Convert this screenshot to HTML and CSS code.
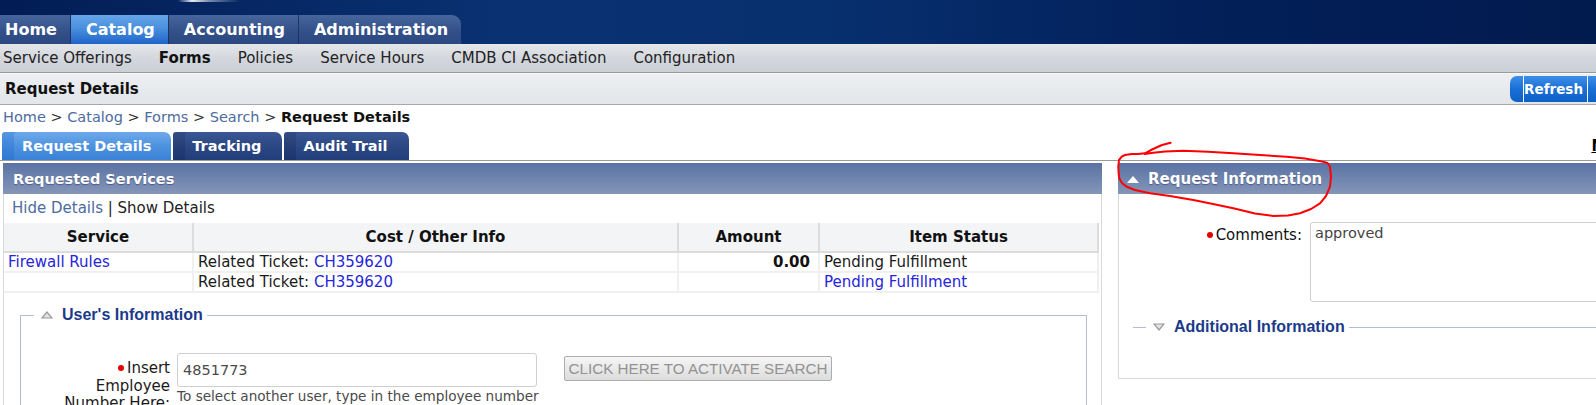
FILE: index.html
```html
<!DOCTYPE html>
<html lang="en">
<head>
<meta charset="utf-8">
<title>Request Details</title>
<link rel="stylesheet" href="styles.css">
</head>
<body>
<div class="page">
  <header class="banner">
    <nav class="main-tabs">
      <a class="mtab first" href="#">Home</a>
      <a class="mtab active" href="#">Catalog</a>
      <a class="mtab" href="#">Accounting</a>
      <a class="mtab last" href="#">Administration</a>
    </nav>
  </header>

  <nav class="subnav">
    <a href="#">Service Offerings</a>
    <a href="#" class="cur">Forms</a>
    <a href="#">Policies</a>
    <a href="#">Service Hours</a>
    <a href="#">CMDB CI Association</a>
    <a href="#">Configuration</a>
  </nav>

  <div class="titlebar">
    <h1>Request Details</h1>
    <div class="actions">
      <span class="cap"></span>
      <button class="tbtn">Refresh</button>
      <button class="tbtn second">Close</button>
    </div>
  </div>

  <div class="crumbs">
    <a href="#">Home</a> &gt; <a href="#">Catalog</a> &gt; <a href="#">Forms</a> &gt; <a href="#">Search</a> &gt; <b>Request Details</b>
  </div>

  <div class="ctabs">
    <a class="ctab active" href="#">Request Details</a>
    <a class="ctab" href="#">Tracking</a>
    <a class="ctab" href="#">Audit Trail</a>
    <a class="newlink" href="#">New</a>
  </div>

  <main class="content">
    <section class="panel">
      <h2 class="phead">Requested Services</h2>
      <div class="toggles"><a href="#" class="muted">Hide Details</a> | Show Details</div>
      <table class="svc">
        <colgroup>
          <col class="c1"><col class="c2"><col class="c3"><col class="c4">
        </colgroup>
        <thead>
          <tr><th>Service</th><th>Cost / Other Info</th><th>Amount</th><th>Item Status</th></tr>
        </thead>
        <tbody>
          <tr>
            <td><a class="lnk" href="#">Firewall Rules</a></td>
            <td>Related Ticket: <a class="lnk" href="#">CH359620</a></td>
            <td class="amt">0.00</td>
            <td>Pending Fulfillment</td>
          </tr>
          <tr>
            <td></td>
            <td>Related Ticket: <a class="lnk" href="#">CH359620</a></td>
            <td></td>
            <td><a class="lnk" href="#">Pending Fulfillment</a></td>
          </tr>
        </tbody>
      </table>

      <fieldset class="group">
        <legend class="glegend">
          <svg class="tri" width="12" height="8" viewBox="0 0 12 8"><polygon points="1,7 6,1 11,7" fill="#e4e4e4" stroke="#9a9a9a" stroke-width="1.2"/></svg>
          <span>User's Information</span>
        </legend>
        <div class="field-row">
          <label class="flabel"><span class="req"></span>Insert Employee Number Here:</label>
          <div class="field">
            <input class="text-in" type="text" value="4851773">
            <div class="help">To select another user, type in the employee number</div>
          </div>
          <button class="search-btn">CLICK HERE TO ACTIVATE SEARCH</button>
        </div>
      </fieldset>
    </section>

    <section class="panel right">
      <h2 class="phead">
        <svg class="tri-w" width="12" height="8" viewBox="0 0 12 8"><polygon points="0,8 6,1 12,8" fill="#fff"/></svg>
        <span>Request Information</span>
      </h2>
      <div class="form-row">
        <label class="clabel"><span class="req"></span>Comments:</label>
        <textarea class="comments">approved</textarea>
      </div>
      <fieldset class="group collapsed">
        <legend class="glegend">
          <svg class="tri" width="12" height="8" viewBox="0 0 12 8"><polygon points="1,1 11,1 6,7" fill="#e4e4e4" stroke="#9a9a9a" stroke-width="1.2"/></svg>
          <span>Additional Information</span>
        </legend>
      </fieldset>
    </section>
  </main>

  <svg class="annotation" width="240" height="90" viewBox="0 0 240 90" aria-hidden="true">
    <polyline fill="none" stroke="#f00" stroke-width="2" stroke-linecap="round" stroke-linejoin="round"
      points="70.7,12.7 62,15 52,19.5 45,23.3 38,24 31.7,24 25,25 21.7,26.7 19,30 18.3,36.7 18.6,43 19.3,48.3 22,53 26.7,56.7 35,60 50,63.3 70,66 93.3,70 113,74 133.3,78.3 155,83.5 173.3,86 188,85.5 200,83.3 211,79 220,73.3 226,66 230,56.7 231,47 230,36.7 227.5,33 223.3,31.7 205,28.5 186.7,26.7 160,25 133.3,23.3 108,21.8 83.3,20.7 65,21.5 53.3,22.7 45,24"/>
  </svg>
</div>
</body>
</html>
```

FILE: styles.css
```css
* { box-sizing: border-box; }
html, body { margin: 0; padding: 0; background: #fff; overflow: hidden; }
body {
  font-family: "DejaVu Sans", Verdana, sans-serif;
  font-size: 14.5px;
  color: #151515;
}
a { text-decoration: none; color: inherit; }
.page { position: relative; width: 1650px; }

/* hand-drawn highlight over the screenshot */
.annotation {
  position: absolute;
  left: 1100px;
  top: 130px;
  pointer-events: none;
}

/* top banner */
.banner {
  height: 44px;
  padding-top: 15px;
  background:
    linear-gradient(90deg, transparent 178px, rgba(255,255,255,.9) 192px, rgba(255,255,255,.45) 210px, transparent 240px) 0 0 / 100% 2px no-repeat,
    linear-gradient(90deg, #021d55 0%, #0a3273 32%, #07306e 50%, #03205a 72%, #011a4c 100%);
}
.main-tabs { display: flex; height: 29px; }
.mtab {
  display: flex;
  align-items: center;
  padding: 0 13px 0 15px;
  font-size: 16px;
  font-weight: bold;
  color: #fff;
  background: linear-gradient(#46659d, #324f88 60%, #2c4880);
  border-right: 1px solid #1d3366;
}
.mtab.first { padding-left: 5px; }
.mtab.active { background: linear-gradient(#66a5e8, #4a90de 45%, #1f64c9); }
.mtab.last { border-right: 0; border-radius: 0 9px 0 0; }

/* sub navigation */
.subnav {
  display: flex;
  align-items: center;
  gap: 27px;
  height: 29px;
  padding-left: 3px;
  font-size: 15px;
  color: #222;
  background: linear-gradient(#e5e7ea, #d5d9de 45%, #cbd0d7);
  border-bottom: 1px solid #9a9a9a;
}
.subnav .cur { font-weight: bold; color: #111; }

/* title bar */
.titlebar {
  display: grid;
  grid-template-columns: 1fr auto;
  align-items: center;
  height: 32px;
  padding-left: 5px;
  background: linear-gradient(#edeff2, #e2e5e9);
  border-top: 1px solid #f7f7f7;
  border-bottom: 1px solid #a8a8a8;
}
.titlebar h1 { margin: 0; font-size: 15px; font-weight: bold; color: #111; }
.actions { display: flex; height: 26px; }
.cap {
  width: 13px;
  border-radius: 7px 0 0 7px;
  background: linear-gradient(#3d8fe6, #1a6fd6 50%, #0c60c8);
}
.tbtn {
  height: 26px;
  margin: 0;
  padding: 0 4px 0 0;
  border: 0;
  border-left: 1px solid #fff;
  font-family: "DejaVu Sans", Verdana, sans-serif;
  font-size: 13.5px;
  font-weight: bold;
  color: #fff;
  background: linear-gradient(#3d8fe6, #1a6fd6 50%, #0c60c8);
}
.tbtn.second { width: 63px; padding-left: 12px; text-align: left; }

/* breadcrumb */
.crumbs {
  height: 27px;
  padding: 2px 0 0 3px;
  line-height: 20px;
  color: #333;
}
.crumbs a { color: #4d6c9e; }
.crumbs b { color: #111; }

/* content tabs */
.ctabs {
  display: flex;
  align-items: flex-end;
  height: 29px;
  padding-left: 2px;
  border-bottom: 1px solid #9a9a9a;
}
.ctab {
  display: flex;
  align-items: center;
  height: 28px;
  padding: 0 21px 0 19px;
  margin-right: 2px;
  font-size: 14.5px;
  font-weight: bold;
  color: #fff;
  background: linear-gradient(#3a5893, #2a4683 55%, #213d7a);
  border-radius: 3px 7px 0 0;
  box-shadow: inset 12px 0 0 rgba(0, 0, 30, .12);
}
.ctab.active {
  padding: 0 20px;
  background: linear-gradient(#6eaaea, #4d92df 50%, #3a82d6);
  box-shadow: inset 12px 0 0 rgba(20, 90, 200, .25);
}
.newlink {
  align-self: center;
  margin-left: auto;
  padding-right: 22px;
  font-size: 15px;
  font-weight: bold;
  color: #000;
  text-decoration: underline;
}

/* main content */
.content {
  display: grid;
  grid-template-columns: 1099px 1fr;
  column-gap: 16px;
  align-items: start;
  padding: 2px 0 0 3px;
}
.panel {
  border: 1px solid #d9d9d9;
  border-top: 0;
  min-height: 260px;
}
.panel.right { min-height: 0; padding-bottom: 41px; }
.phead {
  display: flex;
  align-items: center;
  gap: 9px;
  height: 31px;
  margin: 0 -1px;
  padding-left: 10px;
  font-size: 14.5px;
  font-weight: bold;
  color: #fff;
  text-shadow: 0 1px 1px rgba(0, 0, 40, .35);
  background: linear-gradient(#5a73a3, #7186b0 55%, #8496b7);
}
.right .phead { padding-left: 9px; font-size: 15px; }
.tri-w { display: block; }

.toggles {
  height: 28px;
  padding: 4px 0 0 8px;
  line-height: 20px;
  font-size: 15px;
  color: #222;
}
.muted { color: #4d6c9e; }

/* services table */
.svc {
  width: 1095px;
  margin-top: 1px;
  table-layout: fixed;
  border-collapse: separate;
  border-spacing: 0;
}
.c1 { width: 190px; }
.c2 { width: 485px; }
.c3 { width: 141px; }
.c4 { width: 279px; }
.svc th {
  height: 30px;
  padding: 0;
  font-size: 15px;
  font-weight: bold;
  color: #111;
  text-align: center;
  background: #f3f4f6;
  border-right: 2px solid #dcdcdc;
  border-bottom: 2px solid #dcdcdc;
}
.svc td {
  height: 20px;
  padding: 0 4px;
  line-height: 18px;
  font-size: 15px;
  white-space: nowrap;
  color: #1a1a1a;
  border-right: 2px solid #f0f0f0;
  border-bottom: 2px solid #f0f0f0;
}
.svc td.amt { text-align: right; font-weight: bold; padding-right: 8px; color: #111; }
.lnk { color: #2626d8; }

/* fieldsets */
.group {
  margin: 12px 14px 0 16px;
  padding: 28px 0 20px 0;
  border: 1px solid #b3bcd3;
  border-bottom: 0;
  min-width: 0;
}
.glegend {
  display: flex;
  align-items: center;
  gap: 9px;
  margin-left: 13px;
  padding: 0 4px 0 7px;
  height: 20px;
  font-family: "Liberation Sans", Arial, sans-serif;
  font-size: 16px;
  font-weight: bold;
  color: #1b3a8a;
}
.tri { display: block; }

.field-row {
  display: grid;
  grid-template-columns: 149px 360px 268px;
  column-gap: 7px;
  align-items: start;
}
.field-row .search-btn { margin-left: 20px; }
.flabel {
  padding-top: 7px;
  padding-left: 34px;
  line-height: 17.5px;
  font-size: 15px;
  text-align: right;
  color: #1a1a1a;
}
.req {
  display: inline-block;
  width: 6px;
  height: 6px;
  margin: 0 3px 2px 0;
  border-radius: 50%;
  background: #e30000;
  vertical-align: middle;
}
.text-in {
  display: block;
  width: 360px;
  height: 34px;
  margin: 0;
  padding: 0 0 0 5px;
  font-family: "DejaVu Sans", Verdana, sans-serif;
  font-size: 14.5px;
  color: #4a4a4a;
  border: 1px solid #cfcfcf;
  border-radius: 3px;
  background: #fff;
}
.help {
  line-height: 18px;
  font-size: 13.6px;
  white-space: nowrap;
  color: #4a4a4a;
}
.search-btn {
  width: 268px;
  height: 25px;
  margin-top: 3px;
  padding: 0;
  font-family: "Liberation Sans", Arial, sans-serif;
  font-size: 15.2px;
  color: #929292;
  background: linear-gradient(#f6f6f6, #e9e9e9 50%, #dcdcdc);
  border: 1px solid #adadad;
  border-radius: 2px;
}

/* right panel form */
.form-row {
  display: grid;
  grid-template-columns: 183px 1fr;
  column-gap: 8px;
  padding-top: 28px;
}
.clabel {
  padding-top: 3px;
  line-height: 20px;
  text-align: right;
  font-size: 15px;
  color: #111;
}
.comments {
  display: block;
  width: 100%;
  height: 80px;
  margin: 0;
  padding: 0 4px;
  resize: none;
  font-family: "DejaVu Sans", Verdana, sans-serif;
  font-size: 14.5px;
  line-height: 20px;
  color: #444;
  border: 1px solid #cfcfcf;
  border-radius: 3px;
}
.group.collapsed {
  margin: 15px 0 0 14px;
  padding: 0;
  border: 0;
  border-top: 1px solid #b3bcd3;
}
```
